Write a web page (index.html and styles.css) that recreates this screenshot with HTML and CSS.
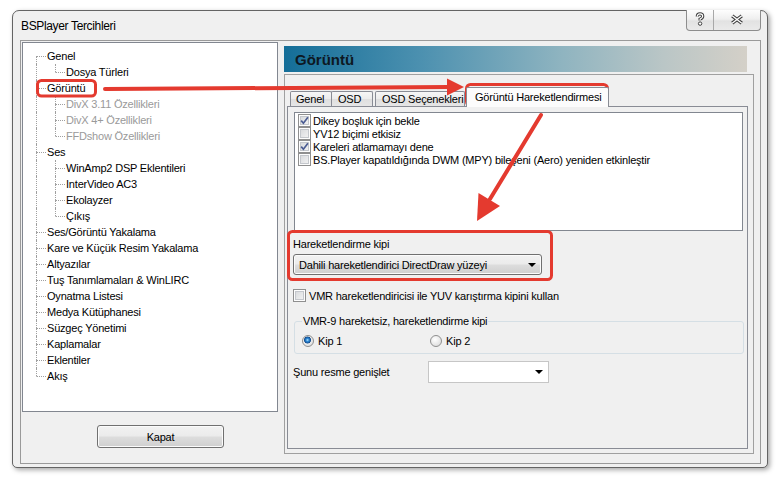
FILE: index.html
```html
<!DOCTYPE html>
<html lang="tr">
<head>
<meta charset="utf-8">
<title>BSPlayer Tercihleri</title>
<link rel="stylesheet" href="styles.css">
</head>
<body>
<div class="window">
  <div class="titlebar">
    <span class="title">BSPlayer Tercihleri</span>
    <div class="caption-btns">
      <span class="cbtn help">
        <svg width="12" height="14" viewBox="0 0 12 14">
          <path d="M3.3 4.6 Q3.3 1.9 6 1.9 Q8.7 1.9 8.7 4.3 Q8.7 5.9 6.1 7.1 L6.1 8.6" fill="none" stroke="#404040" stroke-width="3.2"/>
          <path d="M3.3 4.6 Q3.3 1.9 6 1.9 Q8.7 1.9 8.7 4.3 Q8.7 5.9 6.1 7.1 L6.1 8.6" fill="none" stroke="#fff" stroke-width="1.2"/>
          <circle cx="6.1" cy="11.6" r="1.7" fill="#fff" stroke="#404040" stroke-width="1"/>
        </svg>
      </span>
      <span class="cbtn close">
        <svg width="14" height="11" viewBox="0 0 14 11">
          <path d="M2.2 1.8 L11.8 9.2 M11.8 1.8 L2.2 9.2" stroke="#404040" stroke-width="3.4"/>
          <path d="M2.2 1.8 L11.8 9.2 M11.8 1.8 L2.2 9.2" stroke="#fff" stroke-width="1.3"/>
        </svg>
      </span>
    </div>
  </div>

  <div class="frame">
    <div class="leftcol">
      <div class="tree">
        <div class="node"><span class="conn top first"><i></i><i></i></span><span class="txt">Genel</span></div>
        <div class="node"><span class="pass"></span><span class="conn last"><i></i><i></i></span><span class="txt">Dosya Türleri</span></div>
        <div class="node"><span class="conn top"><i></i><i></i></span><span class="txt">Görüntü</span></div>
        <div class="node"><span class="pass"></span><span class="conn"><i></i><i></i></span><span class="txt gray">DivX 3.11 Özellikleri</span></div>
        <div class="node"><span class="pass"></span><span class="conn"><i></i><i></i></span><span class="txt gray">DivX 4+ Özellikleri</span></div>
        <div class="node"><span class="pass"></span><span class="conn last"><i></i><i></i></span><span class="txt gray">FFDshow Özellikleri</span></div>
        <div class="node"><span class="conn top"><i></i><i></i></span><span class="txt">Ses</span></div>
        <div class="node"><span class="pass"></span><span class="conn"><i></i><i></i></span><span class="txt">WinAmp2 DSP Eklentileri</span></div>
        <div class="node"><span class="pass"></span><span class="conn"><i></i><i></i></span><span class="txt">InterVideo AC3</span></div>
        <div class="node"><span class="pass"></span><span class="conn"><i></i><i></i></span><span class="txt">Ekolayzer</span></div>
        <div class="node"><span class="pass"></span><span class="conn last"><i></i><i></i></span><span class="txt">Çıkış</span></div>
        <div class="node"><span class="conn top"><i></i><i></i></span><span class="txt">Ses/Görüntü Yakalama</span></div>
        <div class="node"><span class="conn top"><i></i><i></i></span><span class="txt">Kare ve Küçük Resim Yakalama</span></div>
        <div class="node"><span class="conn top"><i></i><i></i></span><span class="txt">Altyazılar</span></div>
        <div class="node"><span class="conn top"><i></i><i></i></span><span class="txt">Tuş Tanımlamaları &amp; WinLIRC</span></div>
        <div class="node"><span class="conn top"><i></i><i></i></span><span class="txt">Oynatma Listesi</span></div>
        <div class="node"><span class="conn top"><i></i><i></i></span><span class="txt">Medya Kütüphanesi</span></div>
        <div class="node"><span class="conn top"><i></i><i></i></span><span class="txt">Süzgeç Yönetimi</span></div>
        <div class="node"><span class="conn top"><i></i><i></i></span><span class="txt">Kaplamalar</span></div>
        <div class="node"><span class="conn top"><i></i><i></i></span><span class="txt">Eklentiler</span></div>
        <div class="node"><span class="conn top last"><i></i><i></i></span><span class="txt">Akış</span></div>
      </div>
      <button class="btn kapat">Kapat</button>
    </div>

    <div class="rightcol">
      <div class="header">Görüntü</div>
      <div class="tabctl">
        <div class="tabs">
          <span class="tab tab-genel">Genel</span>
          <span class="tab tab-osd">OSD</span>
          <span class="tab tab-osdsec">OSD Seçenekleri</span>
          <span class="tab tab-sel">Görüntü Hareketlendirmesi</span>
        </div>
        <div class="page">
          <div class="listbox">
            <div class="item"><span class="chk"><svg width="11" height="11" viewBox="0 0 11 11"><path d="M2.2 5.6 L4.4 8.2 L8.9 2.2" fill="none" stroke="#4b5c93" stroke-width="1.7"/></svg></span><span>Dikey boşluk için bekle</span></div>
            <div class="item"><span class="chk"></span><span>YV12 biçimi etkisiz</span></div>
            <div class="item"><span class="chk"><svg width="11" height="11" viewBox="0 0 11 11"><path d="M2.2 5.6 L4.4 8.2 L8.9 2.2" fill="none" stroke="#4b5c93" stroke-width="1.7"/></svg></span><span>Kareleri atlamamayı dene</span></div>
            <div class="item"><span class="chk"></span><span>BS.Player kapatıldığında DWM (MPY) bileşeni (Aero) yeniden etkinleştir</span></div>
          </div>

          <div class="sect-label">Hareketlendirme kipi</div>
          <div class="btn combo">
            <span>Dahili hareketlendirici DirectDraw yüzeyi</span>
            <svg class="arrow" width="8" height="4" viewBox="0 0 8 4"><polygon points="0,0 8,0 4,4" fill="#000"/></svg>
          </div>

          <div class="item vmr"><span class="chk"></span><span>VMR hareketlendiricisi ile YUV karıştırma kipini kullan</span></div>

          <fieldset class="group">
            <legend>VMR-9 hareketsiz, hareketlendirme kipi</legend>
            <div class="radios">
              <span class="ritem"><span class="radio on"></span><span>Kip 1</span></span>
              <span class="ritem"><span class="radio"></span><span>Kip 2</span></span>
            </div>
          </fieldset>

          <div class="stretch">
            <span class="stretch-lbl">Şunu resme genişlet</span>
            <div class="combo2">
              <svg class="arrow" width="8" height="4" viewBox="0 0 8 4"><polygon points="0,0 8,0 4,4" fill="#000"/></svg>
            </div>
          </div>
        </div>
      </div>
    </div>
  </div>
</div>

<svg class="annot" width="778" height="481" viewBox="0 0 778 481">
  <g fill="none" stroke="#e43a2f" stroke-width="3">
    <rect x="37.5" y="80.5" width="58" height="15.5" rx="4"/>
    <rect x="466.5" y="84.5" width="141" height="21" rx="4"/>
    <rect x="288.5" y="231.5" width="263" height="48" rx="4"/>
  </g>
  <g stroke="#e43a2f" stroke-width="4" stroke-linecap="round">
    <line x1="105" y1="89" x2="450" y2="87"/>
    <line x1="541" y1="115" x2="490" y2="199"/>
  </g>
  <g fill="#e43a2f">
    <polygon points="464,87 447,78.5 447,95.5"/>
    <polygon points="477,221 478.5,193 500,206"/>
  </g>
</svg>
</body>
</html>
```
FILE: styles.css
```css
* { box-sizing: border-box; }
html, body { margin: 0; padding: 0; }
body {
  width: 778px;
  height: 481px;
  overflow: hidden;
  background: #fff;
  font-family: "Liberation Sans", Arial, sans-serif;
  font-size: 11px;
  letter-spacing: -0.2px;
  color: #000;
  position: relative;
}

.window {
  margin: 10px 0 0 12px;
  width: 756px;
  height: 458px;
  border: 1px solid #646464;
  border-radius: 7px 7px 5px 5px;
  background: #f0f0f0;
  box-shadow: 2px 2px 5px rgba(0, 0, 0, 0.35);
  display: flex;
  flex-direction: column;
}

.titlebar {
  height: 29px;
  flex: none;
  display: flex;
  justify-content: space-between;
  align-items: flex-start;
}
.title {
  font-size: 12px;
  letter-spacing: -0.35px;
  line-height: 14px;
  padding: 8px 0 0 8px;
}
.caption-btns {
  display: flex;
  margin: -1px 6px 0 0;
  height: 21px;
  border: 1px solid #8d8d8d;
  border-top: none;
  border-radius: 0 0 4px 4px;
  overflow: hidden;
  background: linear-gradient(#fdfdfd, #efefef 45%, #e2e2e2 55%, #eaeaea);
}
.cbtn {
  display: flex;
  align-items: center;
  justify-content: center;
  height: 20px;
  padding-bottom: 2px;
}
.cbtn.help { width: 27px; border-right: 1px solid #a8a8a8; }
.cbtn.close { width: 46px; }

.frame {
  margin-left: 7px;
  width: 741px;
  height: 424px;
  border: 1px solid #9a9a9a;
  display: flex;
  gap: 6px;
  padding-left: 1px;
  flex: none;
}

.leftcol {
  width: 256px;
  flex: none;
  display: flex;
  flex-direction: column;
  padding-top: 1px;
}
.tree {
  height: 370px;
  border: 1px solid #828790;
  background: #fff;
  padding-top: 5px;
}
.node { display: flex; height: 16px; }
.conn {
  display: flex;
  flex-direction: column;
  width: 10px;
  flex: none;
}
.conn.top { margin-left: 13px; }
.conn i {
  display: block;
  height: 8px;
  border-left: 1px dotted #a0a0a0;
}
.conn i + i { border-top: 1px dotted #a0a0a0; }
.conn.first i:first-child { border-left-color: transparent; }
.conn.last i + i { border-left-color: transparent; }
.pass {
  width: 19px;
  margin-left: 13px;
  flex: none;
  border-left: 1px dotted #a0a0a0;
}
.txt { line-height: 16px; padding-left: 1px; white-space: nowrap; }
.gray { color: #9a9a9a; }

.btn {
  border: 1px solid #707070;
  border-radius: 3px;
  background: linear-gradient(#f2f2f2 0%, #ebebeb 48%, #dddddd 52%, #cfcfcf 100%);
  box-shadow: inset 0 0 0 1px #fbfbfb;
  font-family: "Liberation Sans", Arial, sans-serif;
  font-size: 11px;
  letter-spacing: -0.2px;
  color: #000;
  padding: 0;
}
.kapat {
  margin: 13px 0 0 75px;
  width: 127px;
  height: 23px;
}

.rightcol {
  width: 470px;
  flex: none;
  display: flex;
  flex-direction: column;
}
.header {
  margin-top: 5px;
  width: 463px;
  height: 26px;
  background: linear-gradient(to right, #146e98 0%, #4d91b0 30%, #8fb4c0 60%, #bac6c6 82%, #d4d0c8 100%);
  font-weight: bold;
  font-size: 15px;
  letter-spacing: 0;
  line-height: 27px;
  color: #0d1822;
  padding-left: 11px;
}
.tabctl {
  margin-top: 2px;
  height: 380px;
  border: 1px solid #a0a0a0;
  display: flex;
  flex-direction: column;
}
.tabs {
  height: 31px;
  flex: none;
  display: flex;
  align-items: flex-end;
  padding-left: 5px;
}
.tab {
  height: 15px;
  border: 1px solid #898c95;
  border-bottom: none;
  border-radius: 2px 2px 0 0;
  background: linear-gradient(#f6f6f6, #ececec 50%, #dfdfdf 52%, #e6e6e6);
  line-height: 14px;
  padding-left: 5px;
  white-space: nowrap;
  flex: none;
}
.tab-genel { width: 42px; }
.tab-osd { width: 42px; margin-left: -1px; padding-left: 6px; }
.tab-osdsec { width: 90px; margin-left: 2px; padding-left: 6px; }
.tab-sel {
  width: 143px;
  height: 20px;
  margin-left: 1px;
  margin-bottom: -1px;
  background: #fcfcfc;
  line-height: 18px;
  padding-left: 8px;
  position: relative;
  z-index: 2;
}
.page {
  margin: 0 5px 0 2px;
  height: 343px;
  border: 1px solid #898c95;
  background: #f0f0f0;
  display: flex;
  flex-direction: column;
}
.listbox {
  margin: 5px 4px 0 6px;
  height: 119px;
  flex: none;
  border: 1px solid #828790;
  background: #fff;
  padding: 1px 0 0 3px;
}
.item {
  display: flex;
  align-items: center;
  gap: 2px;
  height: 13px;
  white-space: nowrap;
}
.chk {
  width: 13px;
  height: 13px;
  flex: none;
  border: 1px solid #8f8f8f;
  background: linear-gradient(135deg, #d3d5d8, #f7f7f7);
  box-shadow: inset 0 0 0 1px #fdfdfd, inset 0 0 0 2px #c4c7cc;
  display: flex;
  align-items: center;
  justify-content: center;
}
.sect-label {
  margin: 7px 0 0 5px;
  height: 13px;
  line-height: 13px;
}
.combo {
  margin: 3px 0 0 5px;
  width: 249px;
  height: 21px;
  flex: none;
  display: flex;
  align-items: center;
  justify-content: space-between;
  padding: 0 5px 0 5px;
  white-space: nowrap;
}
.vmr { margin: 14px 0 0 5px; gap: 3px; }
.group {
  margin: 13px 3px 0 6px;
  padding: 0 6px 6px 7px;
  border: 1px solid #d5dfe5;
  border-radius: 3px;
  min-width: 0;
}
.group legend {
  padding: 0 1px;
  line-height: 13px;
  height: 13px;
}
.radios {
  display: flex;
  margin-top: 6px;
  height: 13px;
}
.ritem {
  width: 128px;
  display: flex;
  align-items: center;
  gap: 4px;
}
.radio {
  width: 12px;
  height: 12px;
  flex: none;
  border-radius: 50%;
  border: 1px solid #8f8f8f;
  background: radial-gradient(circle at 40% 35%, #ffffff, #d6d6d6);
}
.radio.on {
  background:
    radial-gradient(circle at 45% 40%, #bfe8ff 0, #2b8ad8 1.5px, #174e8e 3.2px, transparent 3.8px),
    radial-gradient(circle at 40% 35%, #ffffff, #d6d6d6);
}
.stretch {
  margin: 7px 0 0 5px;
  height: 22px;
  display: flex;
  align-items: center;
}
.stretch-lbl { width: 135px; flex: none; }
.combo2 {
  width: 121px;
  height: 22px;
  border: 1px solid #c6c6c6;
  background: #fff;
  display: flex;
  align-items: center;
  justify-content: flex-end;
  padding-right: 5px;
}

.annot {
  position: absolute;
  left: 0;
  top: 0;
  pointer-events: none;
}
```
